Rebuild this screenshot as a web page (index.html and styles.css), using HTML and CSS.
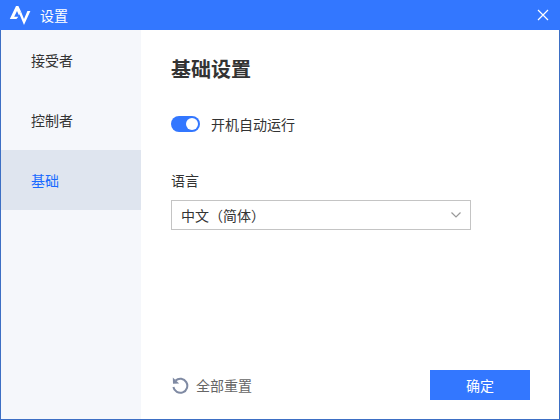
FILE: index.html
```html
<!DOCTYPE html>
<html lang="zh-CN">
<head>
    <meta charset="UTF-8">
    <title>设置</title>
    <link rel="stylesheet" href="styles.css">
</head>
<body>
    <div class="window">
        <div class="titlebar">
            <svg class="logo" width="22" height="22" viewBox="0 0 22 22">
                <path d="M0.8 15 L7 2 L9.4 2 L12 7.4 L10 11.4 L8 7 L5.2 12.8 L9.4 12.8 L7.4 15 Z" fill="#fff"/>
                <path d="M10.4 10 L15 21 L21.4 7 L18.4 7 L15 15 L12 7.4 Z" fill="#fff"/>
            </svg>
            <span class="title">设置</span>
            <svg class="close" width="12" height="12" viewBox="0 0 12 12">
                <path d="M1 1 L11 11 M11 1 L1 11" stroke="#fff" stroke-width="1.2" fill="none"/>
            </svg>
        </div>
        <div class="main">
            <div class="sidebar">
                <div class="nav-item">接受者</div>
                <div class="nav-item">控制者</div>
                <div class="nav-item active">基础</div>
            </div>
            <div class="content">
                <h1>基础设置</h1>
                <div class="toggle-row">
                    <span class="toggle"><span class="knob"></span></span>
                    <span>开机自动运行</span>
                </div>
                <div class="field-label">语言</div>
                <div class="select">
                    <span>中文（简体）</span>
                    <svg width="12" height="8" viewBox="0 0 12 8">
                        <path d="M1.5 1.5 L6 6 L10.5 1.5" stroke="#999" stroke-width="1.2" fill="none"/>
                    </svg>
                </div>
                <div class="footer">
                    <div class="reset">
                        <svg width="18" height="18" viewBox="0 0 18 18">
                            <path d="M4.6 4.6 A7 7 0 1 1 2.4 11" stroke="#7f8aa3" stroke-width="2" fill="none"/>
                            <path d="M1.8 1.6 L2 7.8 L8.2 7.6 Z" fill="#7f8aa3"/>
                        </svg>
                        <span>全部重置</span>
                    </div>
                    <button class="confirm">确定</button>
                </div>
            </div>
        </div>
    </div>
</body>
</html>
```

FILE: styles.css
```css
* {
    margin: 0;
    padding: 0;
    box-sizing: border-box;
}

body {
    width: 560px;
    height: 420px;
    overflow: hidden;
    background: #fff;
    font-family: "Noto Sans CJK SC", "Liberation Sans", sans-serif;
    font-size: 14px;
    color: #333;
}

.window {
    width: 560px;
    height: 420px;
    display: flex;
    flex-direction: column;
    border: 1px solid #3d6fc4;
    border-top: none;
}

.titlebar {
    height: 30px;
    margin: 0 -1px;
    flex-shrink: 0;
    display: flex;
    align-items: center;
    padding-left: 9px;
    background: #3377ff;
    color: #fff;
}

.logo {
    margin-right: 9px;
}

.title {
    flex: 1;
    font-size: 14px;
}

.close {
    margin-right: 11px;
}

.main {
    flex: 1;
    display: flex;
    min-height: 0;
}

.sidebar {
    width: 140px;
    flex-shrink: 0;
    background: #f5f7fb;
}

.nav-item {
    height: 60px;
    line-height: 60px;
    padding-left: 30px;
}

.nav-item.active {
    background: #dfe5ef;
    color: #1a6bff;
}

.content {
    flex: 1;
    display: flex;
    flex-direction: column;
    padding: 24px 29px 19px 30px;
}

h1 {
    font-size: 20px;
    font-weight: 700;
    line-height: 30px;
    color: #333;
}

.toggle-row {
    display: flex;
    align-items: center;
    gap: 11px;
    margin-top: 28px;
    height: 24px;
}

.toggle {
    width: 29px;
    height: 16px;
    border-radius: 8px;
    background: #3377ff;
    position: relative;
}

.knob {
    position: absolute;
    top: 2px;
    right: 2px;
    width: 12px;
    height: 12px;
    border-radius: 50%;
    background: #fff;
}

.field-label {
    margin-top: 32px;
    line-height: 24px;
}

.select {
    width: 300px;
    height: 30px;
    margin-top: 8px;
    display: flex;
    align-items: center;
    justify-content: space-between;
    padding: 0 8px 0 9px;
    border: 1px solid #c4c4c4;
    background: #fff;
}

.footer {
    margin-top: auto;
    display: flex;
    align-items: center;
    justify-content: space-between;
}

.reset {
    display: flex;
    align-items: center;
    gap: 7px;
    font-size: 14px;
    color: #666;
}

.confirm {
    width: 100px;
    height: 30px;
    border: none;
    background: #3377ff;
    color: #fff;
    font-family: inherit;
    font-size: 14px;
}
```
